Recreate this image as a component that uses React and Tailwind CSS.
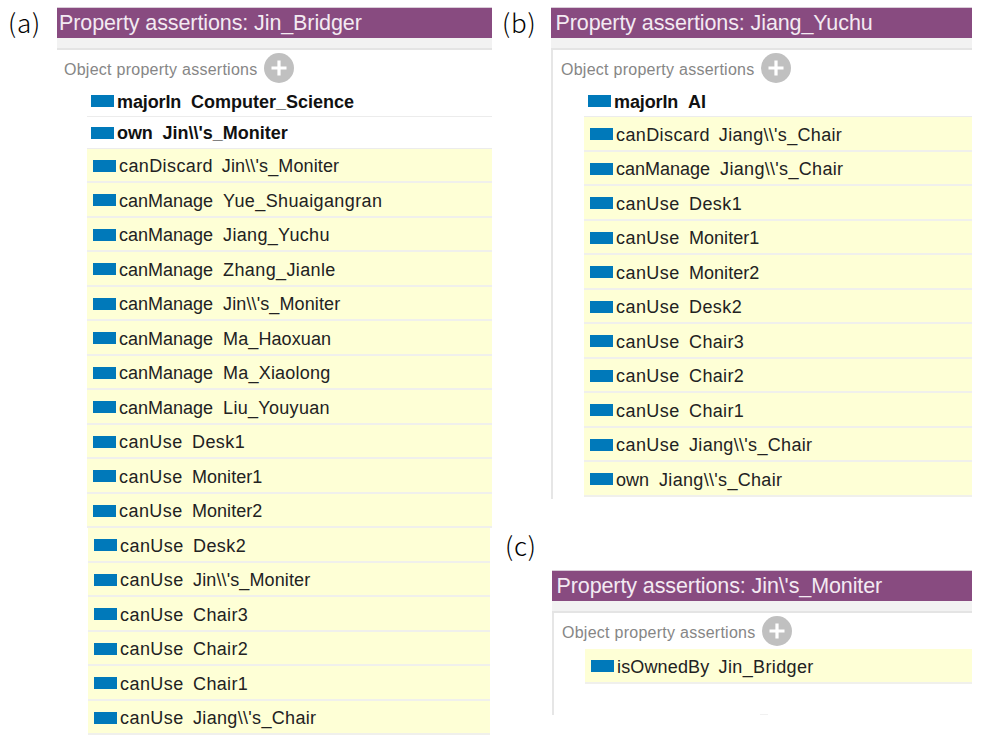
const FONT = "font-['Liberation_Sans',Arial,sans-serif]";

const JIN = "Jin\\\\'s_Moniter";
const JIANG = "Jiang\\\\'s_Chair";

const bridger = [
  ['canDiscard', JIN],
  ['canManage', 'Yue_Shuaigangran'],
  ['canManage', 'Jiang_Yuchu'],
  ['canManage', 'Zhang_Jianle'],
  ['canManage', JIN],
  ['canManage', 'Ma_Haoxuan'],
  ['canManage', 'Ma_Xiaolong'],
  ['canManage', 'Liu_Youyuan'],
  ['canUse', 'Desk1'],
  ['canUse', 'Moniter1'],
  ['canUse', 'Moniter2'],
];

const bridgerMore = [
  ['canUse', 'Desk2'],
  ['canUse', JIN],
  ['canUse', 'Chair3'],
  ['canUse', 'Chair2'],
  ['canUse', 'Chair1'],
  ['canUse', JIANG],
];

const yuchu = [
  ['canDiscard', JIANG],
  ['canManage', JIANG],
  ['canUse', 'Desk1'],
  ['canUse', 'Moniter1'],
  ['canUse', 'Moniter2'],
  ['canUse', 'Desk2'],
  ['canUse', 'Chair3'],
  ['canUse', 'Chair2'],
  ['canUse', 'Chair1'],
  ['canUse', JIANG],
  ['own', JIANG],
];

const tracking = {
  canDiscard: 'tracking-[0.4px] [word-spacing:-1px]',
  canUse: 'tracking-[0.45px] [word-spacing:-0.8px]',
  isOwnedBy: 'tracking-[0.15px] [word-spacing:-0.6px]',
  [JIN]: 'tracking-[0.12px]',
  [JIANG]: 'tracking-[0.32px]',
  Yue_Shuaigangran: 'tracking-[0.38px]',
  Jiang_Yuchu: 'tracking-[0.33px]',
  Zhang_Jianle: 'tracking-[0.38px]',
  Ma_Haoxuan: 'tracking-[0.1px]',
  Ma_Xiaolong: 'tracking-[0.2px]',
  Liu_Youyuan: 'tracking-[0.3px]',
  Desk1: 'tracking-[0.4px]',
  Desk2: 'tracking-[0.4px]',
  Moniter1: 'tracking-[0.02px]',
  Moniter2: 'tracking-[0.02px]',
  Chair1: 'tracking-[0.35px]',
  Chair2: 'tracking-[0.35px]',
  Chair3: 'tracking-[0.35px]',
  Jin_Bridger: 'tracking-[0.38px]',
};

function Label({ children, className }) {
  return (
    <div className={`shrink-0 whitespace-nowrap font-['Noto_Sans_CJK_SC',sans-serif] text-[26px] font-light leading-[30px] tracking-[0.8px] text-black ${className}`}>
      {children}
    </div>
  );
}

function Title({ children, className = '' }) {
  return (
    <>
      <div className={`h-[31px] whitespace-pre border-t border-[#d9cdd8] bg-[#884b80] text-[21.5px] leading-[31px] tracking-[-0.1px] text-[#f3eaf2] ${className}`}>
        {children}
      </div>
      <div className="h-3 border-b-2 border-[#e4e4e4] bg-[#f2f2f2]" />
    </>
  );
}

function Section({ className = '' }) {
  return (
    <div className={`flex h-[36px] items-center text-[16px] tracking-[0.26px] text-[#868686] ${className}`}>
      <span className="mt-1 whitespace-nowrap">Object property assertions</span>
      <svg className="ml-[6px] shrink-0" width="30" height="30" viewBox="0 0 30 30">
        <circle cx="15" cy="15" r="15" fill="#c0c0c0" />
        <path d="M15 7.5V22.5M7.5 15H22.5" stroke="#fff" strokeWidth="3.2" />
      </svg>
    </div>
  );
}

function Bold({ prop, value, className = '' }) {
  return (
    <div className={`flex items-center border-b border-[#ececec] pl-1 text-[18px] font-bold text-[#111] ${className}`}>
      <span className="h-3 w-[23px] shrink-0 bg-[#0079ba]" />
      <span className="ml-[3px] whitespace-pre pt-[2px] tracking-[-0.12px]">{prop + '  '}</span>
      <span className="whitespace-pre pt-[2px]">{value}</span>
    </div>
  );
}

function Row({ prop, value }) {
  return (
    <div className="flex h-[34.5px] items-center border-b-2 border-[#f0f0ec] bg-[#feffd6] pl-[6px] pt-[2px] text-[18px] text-[#222]">
      <span className="h-3 w-[23px] shrink-0 bg-[#0079ba]" />
      <span className={`ml-[3px] whitespace-pre pt-[2px] ${tracking[prop] ?? ''}`}>{prop + '  '}</span>
      <span className={`whitespace-pre pt-[2px] ${tracking[value] ?? ''}`}>{value}</span>
    </div>
  );
}

export default function App() {
  return (
    <main className={`flex h-[750px] w-[982px] items-start overflow-hidden bg-white ${FONT}`}>
      <Label className="mt-[7px] w-[57px] pl-[8px]">(a)</Label>
      <section className="mt-[7px] w-[435px]">
        <Title className="pl-[2px]">Property assertions: Jin_Bridger</Title>
        <Section className="pl-[7px]" />
        <div className="ml-[30px]">
          <Bold prop="majorIn" value="Computer_Science" className="h-[31px]" />
          <Bold prop="own" value={JIN} className="h-[31.5px] pt-px" />
          {bridger.map(([p, v], i) => <Row key={i} prop={p} value={v} />)}
        </div>
        <div className="ml-[31px] mr-[2px]">
          {bridgerMore.map(([p, v], i) => <Row key={i} prop={p} value={v} />)}
        </div>
      </section>
      <div className="flex w-[480px] flex-col">
        <div className="flex h-[532px] items-start">
          <Label className="mt-[7px] w-[59px] pl-[10px]">(b)</Label>
          <section className="mt-[7px] w-[421px]">
            <Title className="pl-[4.5px]">Property assertions: Jiang_Yuchu</Title>
            <div className="h-[449px] border-l-2 border-[#e6e6e6]">
              <Section className="pl-[8px]" />
              <div className="ml-[31px]">
                <Bold prop="majorIn" value="AI" className="h-[31px]" />
                {yuchu.map(([p, v], i) => <Row key={i} prop={p} value={v} />)}
              </div>
            </div>
          </section>
        </div>
        <div className="-mt-[2px] flex items-start">
          <Label className="w-[60px] pl-[13px]">(c)</Label>
          <section className="mt-[40px] w-[420px]">
            <Title className="pl-[4.5px]">{"Property assertions: Jin\\'s_Moniter"}</Title>
            <div className="flex h-[102px] flex-col border-l-2 border-[#e6e6e6]">
              <Section className="pl-[8px]" />
              <div className="ml-[31px]">
                <Row prop="isOwnedBy" value="Jin_Bridger" />
              </div>
              <div className="ml-[206px] mt-auto h-px w-2 bg-[#f1f1f1]" />
            </div>
          </section>
        </div>
      </div>
    </main>
  );
}
